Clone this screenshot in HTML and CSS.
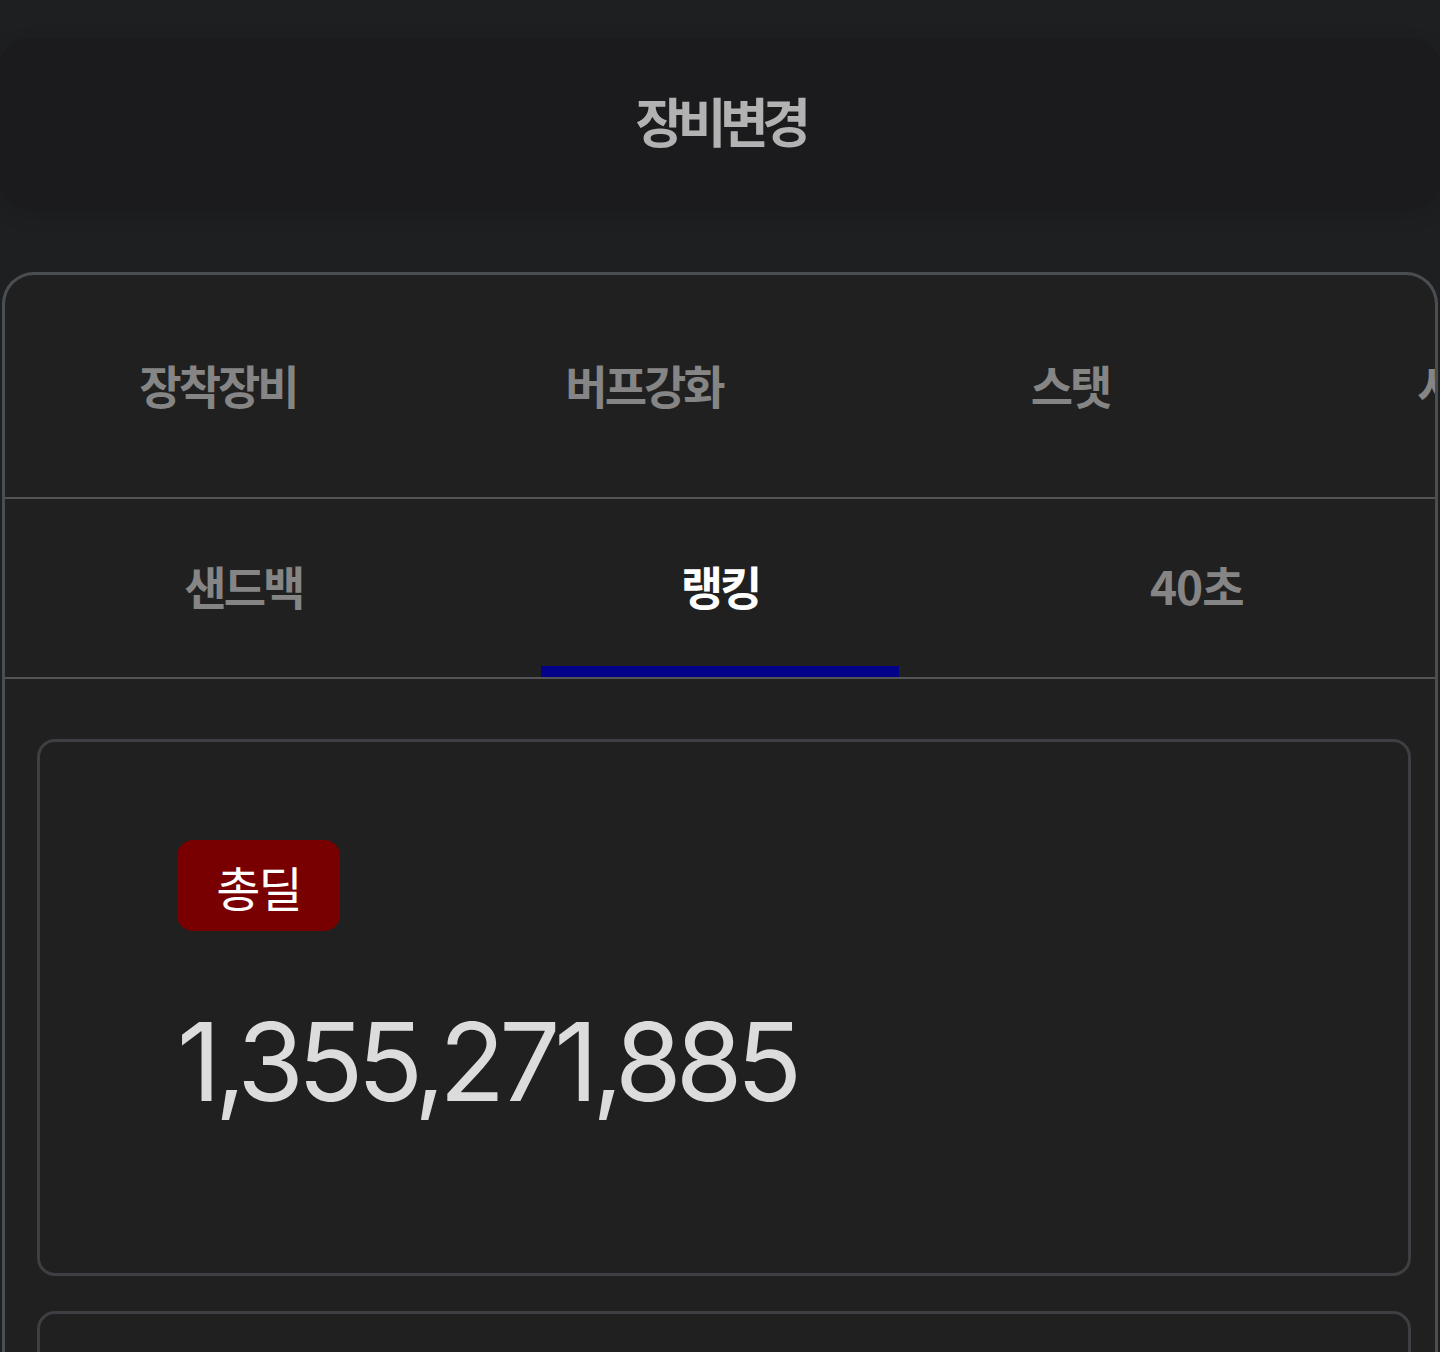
FILE: index.html
```html
<!DOCTYPE html>
<html lang="ko">
<head>
<meta charset="utf-8">
<link rel="stylesheet" href="styles.css">
</head>
<body>
<header class="topbar"><h1 class="title">장비변경</h1></header>
<main class="panel">
  <nav class="tabs tabs-main">
    <div class="tab">장착장비</div>
    <div class="tab">버프강화</div>
    <div class="tab">스탯</div>
    <div class="tab">샤드강화</div>
  </nav>
  <nav class="tabs tabs-sub">
    <div class="subtab">샌드백</div>
    <div class="subtab active">랭킹</div>
    <div class="subtab num">40초</div>
  </nav>
  <section class="cards">
    <article class="card">
      <span class="badge">총딜</span>
      <div class="value">1,355,271,885</div>
    </article>
    <article class="card"></article>
  </section>
</main>
</body>
</html>
```
FILE: styles.css
```css
html, body { margin: 0; padding: 0; }
body {
  background: #1e1f21;
  font-family: "Noto Sans CJK KR", "Noto Sans", sans-serif;
  height: 1352px;
  overflow: hidden;
}
.topbar {
  margin-top: 38px;
  height: 170px;
  background: #1b1b1d;
  border-radius: 28px;
  display: flex;
  align-items: center;
  justify-content: center;
  box-shadow: 0 6px 20px rgba(0,0,0,0.12);
}
.title {
  margin: 0 0 6px;
  font-size: 53px;
  font-weight: 700;
  color: #b2b2b2;
  letter-spacing: -6.5px;
  line-height: 1;
}
.panel {
  margin: 64px 2px 0;
  border: 3px solid #4b4e51;
  border-bottom: none;
  border-radius: 32px 32px 0 0;
  background: #202020;
  height: 1200px;
  overflow: hidden;
}
.tabs { display: flex; }
.tabs-main {
  height: 222px;
  border-bottom: 2px solid #545454;
  overflow: hidden;
}
.tab {
  flex: 0 0 426px;
  display: flex;
  align-items: center;
  justify-content: center;
  font-size: 46px;
  font-weight: 700;
  color: #858585;
  letter-spacing: -3px;
  padding-bottom: 4px;
}
.tabs-sub {
  height: 178px;
  border-bottom: 2px solid #545454;
}
.subtab {
  flex: 1 1 0;
  min-width: 0;
  position: relative;
  display: flex;
  align-items: center;
  justify-content: center;
  font-size: 46px;
  font-weight: 700;
  color: #858585;
  letter-spacing: -3px;
  padding-bottom: 6px;
}
.subtab.num { letter-spacing: -1px; }
.subtab.active { color: #ffffff; }
.subtab.active::after {
  content: "";
  position: absolute;
  left: 12.5%;
  right: 12.5%;
  bottom: 0;
  height: 11px;
  background: #03038a;
}
.cards {
  padding: 60px 24px 0 32px;
  display: flex;
  flex-direction: column;
  gap: 35px;
}
.card {
  border: 3px solid #3d3f42;
  border-radius: 18px;
  padding: 98px 0 0 137px;
  box-sizing: border-box;
  height: 537px;
  flex-shrink: 0;
}
.badge {
  display: inline-flex;
  align-items: center;
  justify-content: center;
  width: 163px;
  height: 91px;
  background: #780000;
  border-radius: 16px;
  color: #ffffff;
  font-size: 48px;
  font-weight: 400;
  letter-spacing: -2px;
}
.value {
  margin-top: 66px;
  font-family: Inter, "Noto Sans", sans-serif;
  font-size: 108px;
  font-weight: 400;
  color: #dcdcdc;
  letter-spacing: -6px;
  line-height: 1.2;
}
```
